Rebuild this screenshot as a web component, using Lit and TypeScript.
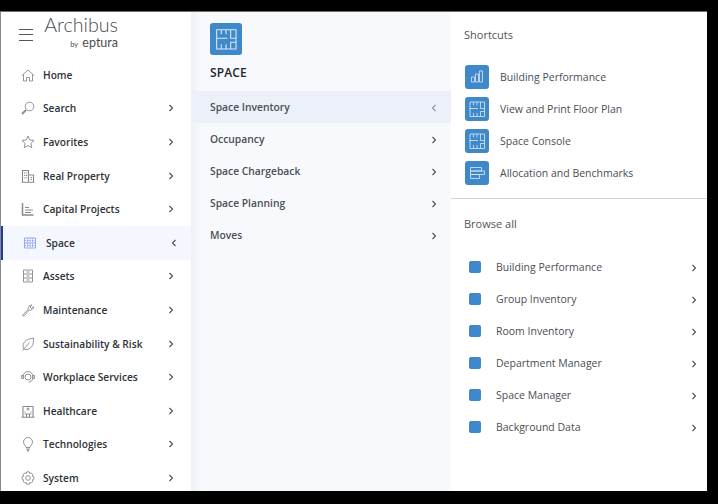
import { LitElement, html, css, svg } from 'lit';
import { customElement } from 'lit/decorators.js';

const floorPlan = svg`<path d="M5 5h14.500v14.500H5z M8.500 5v3.500 M12 5v3.500 M15.500 5v6.500h4 M5 11.500h8 M8.500 19.500v-3.500 M12 19.500v-3.500 M15.500 19.500v-5h4"/>`;

const sideIcons: Record<string, unknown> = {
  home: svg`<path d="M2 8.500 8 3l6 5.500 M3.500 7.500V14h3v-3.500h3V14h3V7.500"/>`,
  search: svg`<circle cx="9.500" cy="6.500" r="4.300"/><path d="M6 10l-4 4" stroke-width="1.800"/>`,
  star: svg`<path d="M8 2l1.800 4 4.200.500-3.100 2.900.900 4.300L8 11.600l-3.800 2.100.900-4.300L2 6.500 6.200 6z"/>`,
  property: svg`<path d="M2.500 14V2.500h6V14 M8.500 7h5v7 M1.500 14.200h13 M4 5h1.200 M6 5h1.200 M4 7.500h1.200 M6 7.500h1.200 M4 10h1.200 M6 10h1.200 M10.500 9.500h1.500 M10.500 11.500h1.500" stroke-width="1.100"/>`,
  capital: svg`<path d="M2.500 2v12h11" stroke-width="1.500"/><path d="M5 6.500h4 M5 9h8 M5 11.500h6" stroke-width="1.200"/>`,
  assets: svg`<path d="M3.500 2h9v12h-9z M3.500 6h9 M3.500 10h9 M6.500 4h3 M6.500 8h3 M6.500 12h3"/>`,
  wrench: svg`<path d="M2.500 13.500l5.800-6.300c-.600-2 .900-4.400 3.700-4.200L10 5l1.500 1.500 2-2c.300 2.800-2.200 4.200-4.200 3.500L3.800 14.200z"/>`,
  leaf: svg`<path d="M3.500 12.500C1.500 7 6 3 13.500 2c.500 6.500-2 11.500-7.500 11.500-1 0-2-.300-2.500-1z M2.500 14.500 9.500 6.500"/>`,
  services: svg`<path d="M3 8.500V7.500a5 5 0 0 1 10 0v1 M1.500 6.500h2v3h-2z M12.500 6.500h2v3h-2z M12.500 9.500c0 2-1.500 3.500-4 3.500"/><circle cx="8" cy="8" r="3"/>`,
  health: svg`<path d="M3 14V3.500h10V14 M1.500 14.200h13 M6.500 14v-3h3v3 M8 4.500v3 M6.500 6h3 M4.500 9h1.200 M10.300 9h1.200 M4.500 11h1.200 M10.300 11h1.200" stroke-width="1.100"/>`,
  bulb: svg`<path d="M6 11.500c0-1.800-2.500-2.700-2.500-5.500a4.500 4.500 0 0 1 9 0c0 2.800-2.500 3.700-2.500 5.500z"/><path d="M6.300 13.200h3.400 M7 14.800h2" stroke-width="1.300"/>`,
  gear: svg`<circle cx="8" cy="8" r="2.300"/><path d="M6.800 1.800h2.400l.500 1.600 1.600-.500 1.600 1.700-.700 1.500 1.600.700v2.400l-1.600.700.700 1.500-1.600 1.700-1.600-.500-.500 1.600H6.800l-.500-1.600-1.600.500-1.600-1.700.700-1.500-1.600-.700V6.800l1.600-.700-.700-1.500 1.600-1.700 1.600.500z"/>`,
};

const sideItems = [
  { label: 'Home', icon: 'home', chevron: false },
  { label: 'Search', icon: 'search', chevron: true },
  { label: 'Favorites', icon: 'star', chevron: true },
  { label: 'Real Property', icon: 'property', chevron: true },
  { label: 'Capital Projects', icon: 'capital', chevron: true },
  { label: 'Space', icon: 'space', chevron: true, active: true },
  { label: 'Assets', icon: 'assets', chevron: true },
  { label: 'Maintenance', icon: 'wrench', chevron: true },
  { label: 'Sustainability & Risk', icon: 'leaf', chevron: true },
  { label: 'Workplace Services', icon: 'services', chevron: true },
  { label: 'Healthcare', icon: 'health', chevron: true },
  { label: 'Technologies', icon: 'bulb', chevron: true },
  { label: 'System', icon: 'gear', chevron: true },
];

const subItems = ['Space Inventory', 'Occupancy', 'Space Chargeback', 'Space Planning', 'Moves'];

const shortcuts = [
  { label: 'Building Performance', icon: svg`<path d="M6.500 12h3v5h-3z M10.500 9h3v8h-3z M14.500 6h3v11h-3z"/>` },
  { label: 'View and Print Floor Plan', icon: floorPlan },
  { label: 'Space Console', icon: floorPlan },
  { label: 'Allocation and Benchmarks', icon: svg`<path d="M5.500 6.500h11v3.500h-11z M5.500 10h14v3.500h-14z M5.500 13.500h9v4h-9z"/>` },
];

const browseItems = [
  'Building Performance',
  'Group Inventory',
  'Room Inventory',
  'Department Manager',
  'Space Manager',
  'Background Data',
];

const chevronRight = html`<svg class="chev" viewBox="0 0 6 8"><path d="M1.500 1 4.500 4 1.500 7"/></svg>`;
const chevronLeft = html`<svg class="chev" viewBox="0 0 6 8"><path d="M4.500 1 1.500 4l3 3"/></svg>`;

@customElement('app-root')
export class AppRoot extends LitElement {
  static styles = css`
    :host {
      display: block;
      width: 718px;
      height: 504px;
      background: #000;
      overflow: hidden;
      font-family: 'Open Sans', sans-serif;
      font-size: 11px;
      box-sizing: border-box;
      padding: 11px 11px 13px 0;
    }
    .window {
      display: flex;
      height: 480px;
      background: #fff;
      border-top: 1px solid #6f6f6f;
      border-left: 1px solid #8a8a8a;
      box-sizing: border-box;
      overflow: hidden;
    }
    .side {
      width: 190px;
      flex: none;
      background: #fff;
    }
    .brand {
      height: 46.100px;
      display: flex;
      align-items: flex-start;
    }
    .burger {
      width: 14px;
      height: 12px;
      margin: 17px 0 0 18px;
      border-top: 1px solid #54565a;
      border-bottom: 1px solid #54565a;
      position: relative;
      box-sizing: border-box;
    }
    .burger::after {
      content: '';
      position: absolute;
      left: 0;
      right: 0;
      top: 4px;
      height: 1px;
      background: #54565a;
    }
    .logo {
      margin-left: 12px;
      width: 73px;
      color: #4b4d53;
      display: flex;
      flex-direction: column;
      align-items: flex-end;
    }
    .logo b {
      font-family: Lato, sans-serif;
      font-weight: 300;
      font-size: 19.700px;
      line-height: 20px;
      margin-top: 3px;
    }
    .logo span {
      font-family: Lato, sans-serif;
      font-size: 12.500px;
      line-height: 13px;
      margin-top: 1px;
      font-weight: 400;
    }
    .logo span small {
      font-size: 7.500px;
      margin-right: 1px;
    }
    .row {
      height: 33.600px;
      display: flex;
      align-items: center;
      color: #2e3238;
      font-weight: 560;
      font-size: 10.200px;
      padding: 0 17px 0 19px;
      box-sizing: border-box;
    }
    .row .icon {
      width: 16px;
      height: 16px;
      flex: none;
      margin-right: 7px;
      fill: none;
      stroke: #87898d;
      stroke-width: 0.900;
    }
    .row .label {
      flex: 1;
    }
    .row.active {
      background: #f4f7fe;
      border-left: 2px solid #1c3f94;
      padding-left: 19px;
      padding-right: 14px;
    }
    .row.active .icon {
      stroke: #8ba2ee;
      margin-right: 8px;
    }
    .chev {
      width: 6px;
      height: 8px;
      flex: none;
      fill: none;
      stroke: #4a4d52;
      stroke-width: 1.100;
    }
    .middle {
      width: 260px;
      flex: none;
      background: linear-gradient(90deg, #eef0f5 0, #f8f9fd 10px);
    }
    .mid-head {
      height: 79px;
      padding: 11px 0 0 19px;
      box-sizing: border-box;
    }
    .tile {
      background: #3f89cb;
      border-radius: 3px;
      display: block;
      fill: none;
      stroke: #dbe9f6;
      stroke-width: 0.800;
    }
    .tile.big {
      width: 32px;
      height: 32px;
    }
    .mid-title {
      font-size: 12px;
      font-weight: 600;
      letter-spacing: 0.100px;
      color: #22262b;
      line-height: 17px;
      margin-top: 9px;
    }
    .sub {
      height: 32px;
      display: flex;
      align-items: center;
      padding: 0 14px 0 19px;
      color: #4a4e55;
      font-weight: 560;
      font-size: 10.300px;
    }
    .sub span {
      flex: 1;
    }
    .sub .chev {
      margin-top: 1px;
    }
    .sub.active {
      background: #ecf0f8;
    }
    .sub.active .chev {
      stroke: #8f9298;
    }
    .right {
      flex: 1;
      background: #fff;
      color: #4a4e55;
    }
    .right h2 {
      font-size: 11px;
      font-weight: 400;
      margin: 0;
      line-height: 16px;
      color: #50545b;
      padding-left: 13px;
    }
    .shortcuts {
      padding-top: 15px;
      height: 187px;
      box-sizing: border-box;
      border-bottom: 1px solid #d4d5d9;
    }
    .shortcut-list {
      margin-top: 18px;
    }
    .shortcut {
      height: 32px;
      display: flex;
      align-items: center;
      padding-left: 14px;
      font-size: 10.500px;
    }
    .shortcut .tile {
      width: 24px;
      height: 24px;
      margin-right: 11px;
    }
    .browse {
      padding-top: 17px;
    }
    .browse-list {
      margin-top: 19px;
    }
    .item {
      height: 32px;
      display: flex;
      align-items: center;
      padding: 0 10px 0 18px;
      font-size: 10.500px;
    }
    .item i {
      width: 12px;
      height: 12px;
      background: #3f89cb;
      border-radius: 2px;
      margin-right: 15px;
    }
    .item span {
      flex: 1;
    }
    .item .chev {
      margin-top: 1px;
    }
  `;

  private renderSideIcon(name: string) {
    if (name === 'space') {
      return html`<svg class="icon" viewBox="0 0 16 16">
        <path d="M2.500 3h11v10h-11z M2.500 8h11" />
        <path d="M2.500 5.500h11 M2.500 10.500h11 M5.500 3v10 M8 3v10 M10.500 3v10" stroke-dasharray="1.500 1" />
      </svg>`;
    }
    return html`<svg class="icon" viewBox="0 0 16 16">${sideIcons[name]}</svg>`;
  }

  render() {
    return html`
      <div class="window">
        <nav class="side">
          <div class="brand">
            <div class="burger"></div>
            <div class="logo">
              <b>Archibus</b>
              <span><small>by</small> eptura</span>
            </div>
          </div>
          ${sideItems.map(
            (item) => html`
              <div class="row ${item.active ? 'active' : ''}">
                ${this.renderSideIcon(item.icon)}
                <span class="label">${item.label}</span>
                ${item.chevron ? (item.active ? chevronLeft : chevronRight) : ''}
              </div>
            `
          )}
        </nav>
        <section class="middle">
          <div class="mid-head">
            <svg class="tile big" viewBox="0 0 24 24">${floorPlan}</svg>
            <div class="mid-title">SPACE</div>
          </div>
          ${subItems.map(
            (label, i) => html`
              <div class="sub ${i === 0 ? 'active' : ''}">
                <span>${label}</span>
                ${i === 0 ? chevronLeft : chevronRight}
              </div>
            `
          )}
        </section>
        <section class="right">
          <div class="shortcuts">
            <h2>Shortcuts</h2>
            <div class="shortcut-list">
              ${shortcuts.map(
                (s) => html`
                  <div class="shortcut">
                    <svg class="tile" viewBox="0 0 24 24">${s.icon}</svg>
                    ${s.label}
                  </div>
                `
              )}
            </div>
          </div>
          <div class="browse">
            <h2>Browse all</h2>
            <div class="browse-list">
              ${browseItems.map(
                (label) => html`
                  <div class="item"><i></i><span>${label}</span>${chevronRight}</div>
                `
              )}
            </div>
          </div>
        </section>
      </div>
    `;
  }
}
